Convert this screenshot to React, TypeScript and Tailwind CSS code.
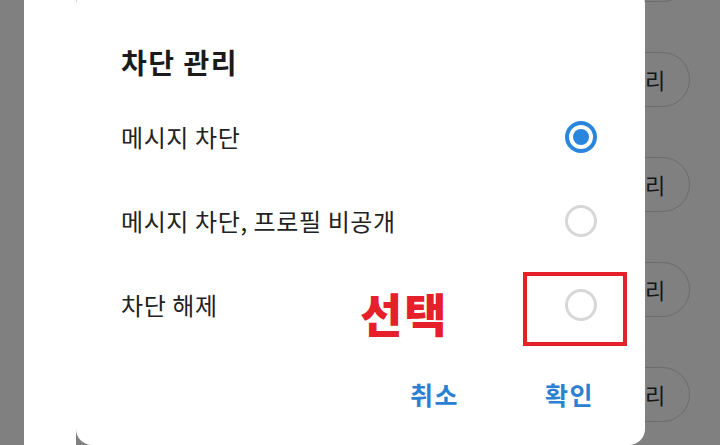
import React from "react"

type Option = {
    label: string
    checked: boolean
}

const options: Option[] = [
    { label: "메시지 차단", checked: true },
    { label: "메시지 차단, 프로필 비공개", checked: false },
    { label: "차단 해제", checked: false },
]

function Radio({ checked }: { checked: boolean }) {
    if (checked) {
        return (
            <div className="w-[32px] h-[32px] rounded-full border-[4px] border-[#2a86dc] flex items-center justify-center">
                <div className="w-[16px] h-[16px] rounded-full bg-[#2a86dc]" />
            </div>
        )
    }
    return <div className="w-[32px] h-[32px] rounded-full border-[3px] border-[#d7d7d7]" />
}

export default function App() {
    const font = { fontFamily: '"Noto Sans CJK KR", "Noto Sans", sans-serif' }

    return (
        <div className="w-[720px] h-[445px] bg-[#808080] overflow-hidden flex" style={font}>
            <div className="w-[24px] shrink-0" />
            <div className="w-[52px] shrink-0 bg-white" />

            {/* dialog */}
            <div className="relative z-10 w-[569px] shrink-0 h-[457px] -mt-[12px] bg-white rounded-[16px] flex flex-col pl-[45px] pr-[48px] pt-[54px]">
                <h1 className="text-[28px] leading-[40px] font-bold tracking-[1.5px] text-[#1b1b1b] mb-[13px]">
                    차단 관리
                </h1>

                {options.map((o) => (
                    <div key={o.label} className="h-[84px] flex items-center justify-between">
                        <span className="text-[24px] tracking-[0.6px] text-[#222222]">{o.label}</span>
                        <Radio checked={o.checked} />
                    </div>
                ))}

                <div className="mt-[18px] h-[60px] flex items-center justify-end gap-[86px] pr-[3px]">
                    <span className="text-[25px] font-bold tracking-[1.5px] text-[#2b80d2]">취소</span>
                    <span className="text-[25px] font-bold tracking-[1.5px] text-[#2b80d2]">확인</span>
                </div>

                {/* annotation */}
                <div className="absolute left-[284px] top-[294px] text-[46px] leading-[60px] font-black tracking-[2px] text-[#e6202a]">
                    선택
                </div>
                <div className="absolute left-[447px] top-[284px] w-[104px] h-[74px] border-[4px] border-[#e6202a]" />
            </div>

            {/* dimmed page behind */}
            <div className="-ml-[45px] -mt-[53px] flex flex-col gap-[50px]">
                {[0, 1, 2, 3, 4].map((i) => (
                    <div key={i} className="w-[90px] h-[55px] shrink-0 rounded-full border border-[#6c6c6c] flex items-center justify-center text-[22px] text-[#161616]">
                        관리
                    </div>
                ))}
            </div>
        </div>
    )
}
